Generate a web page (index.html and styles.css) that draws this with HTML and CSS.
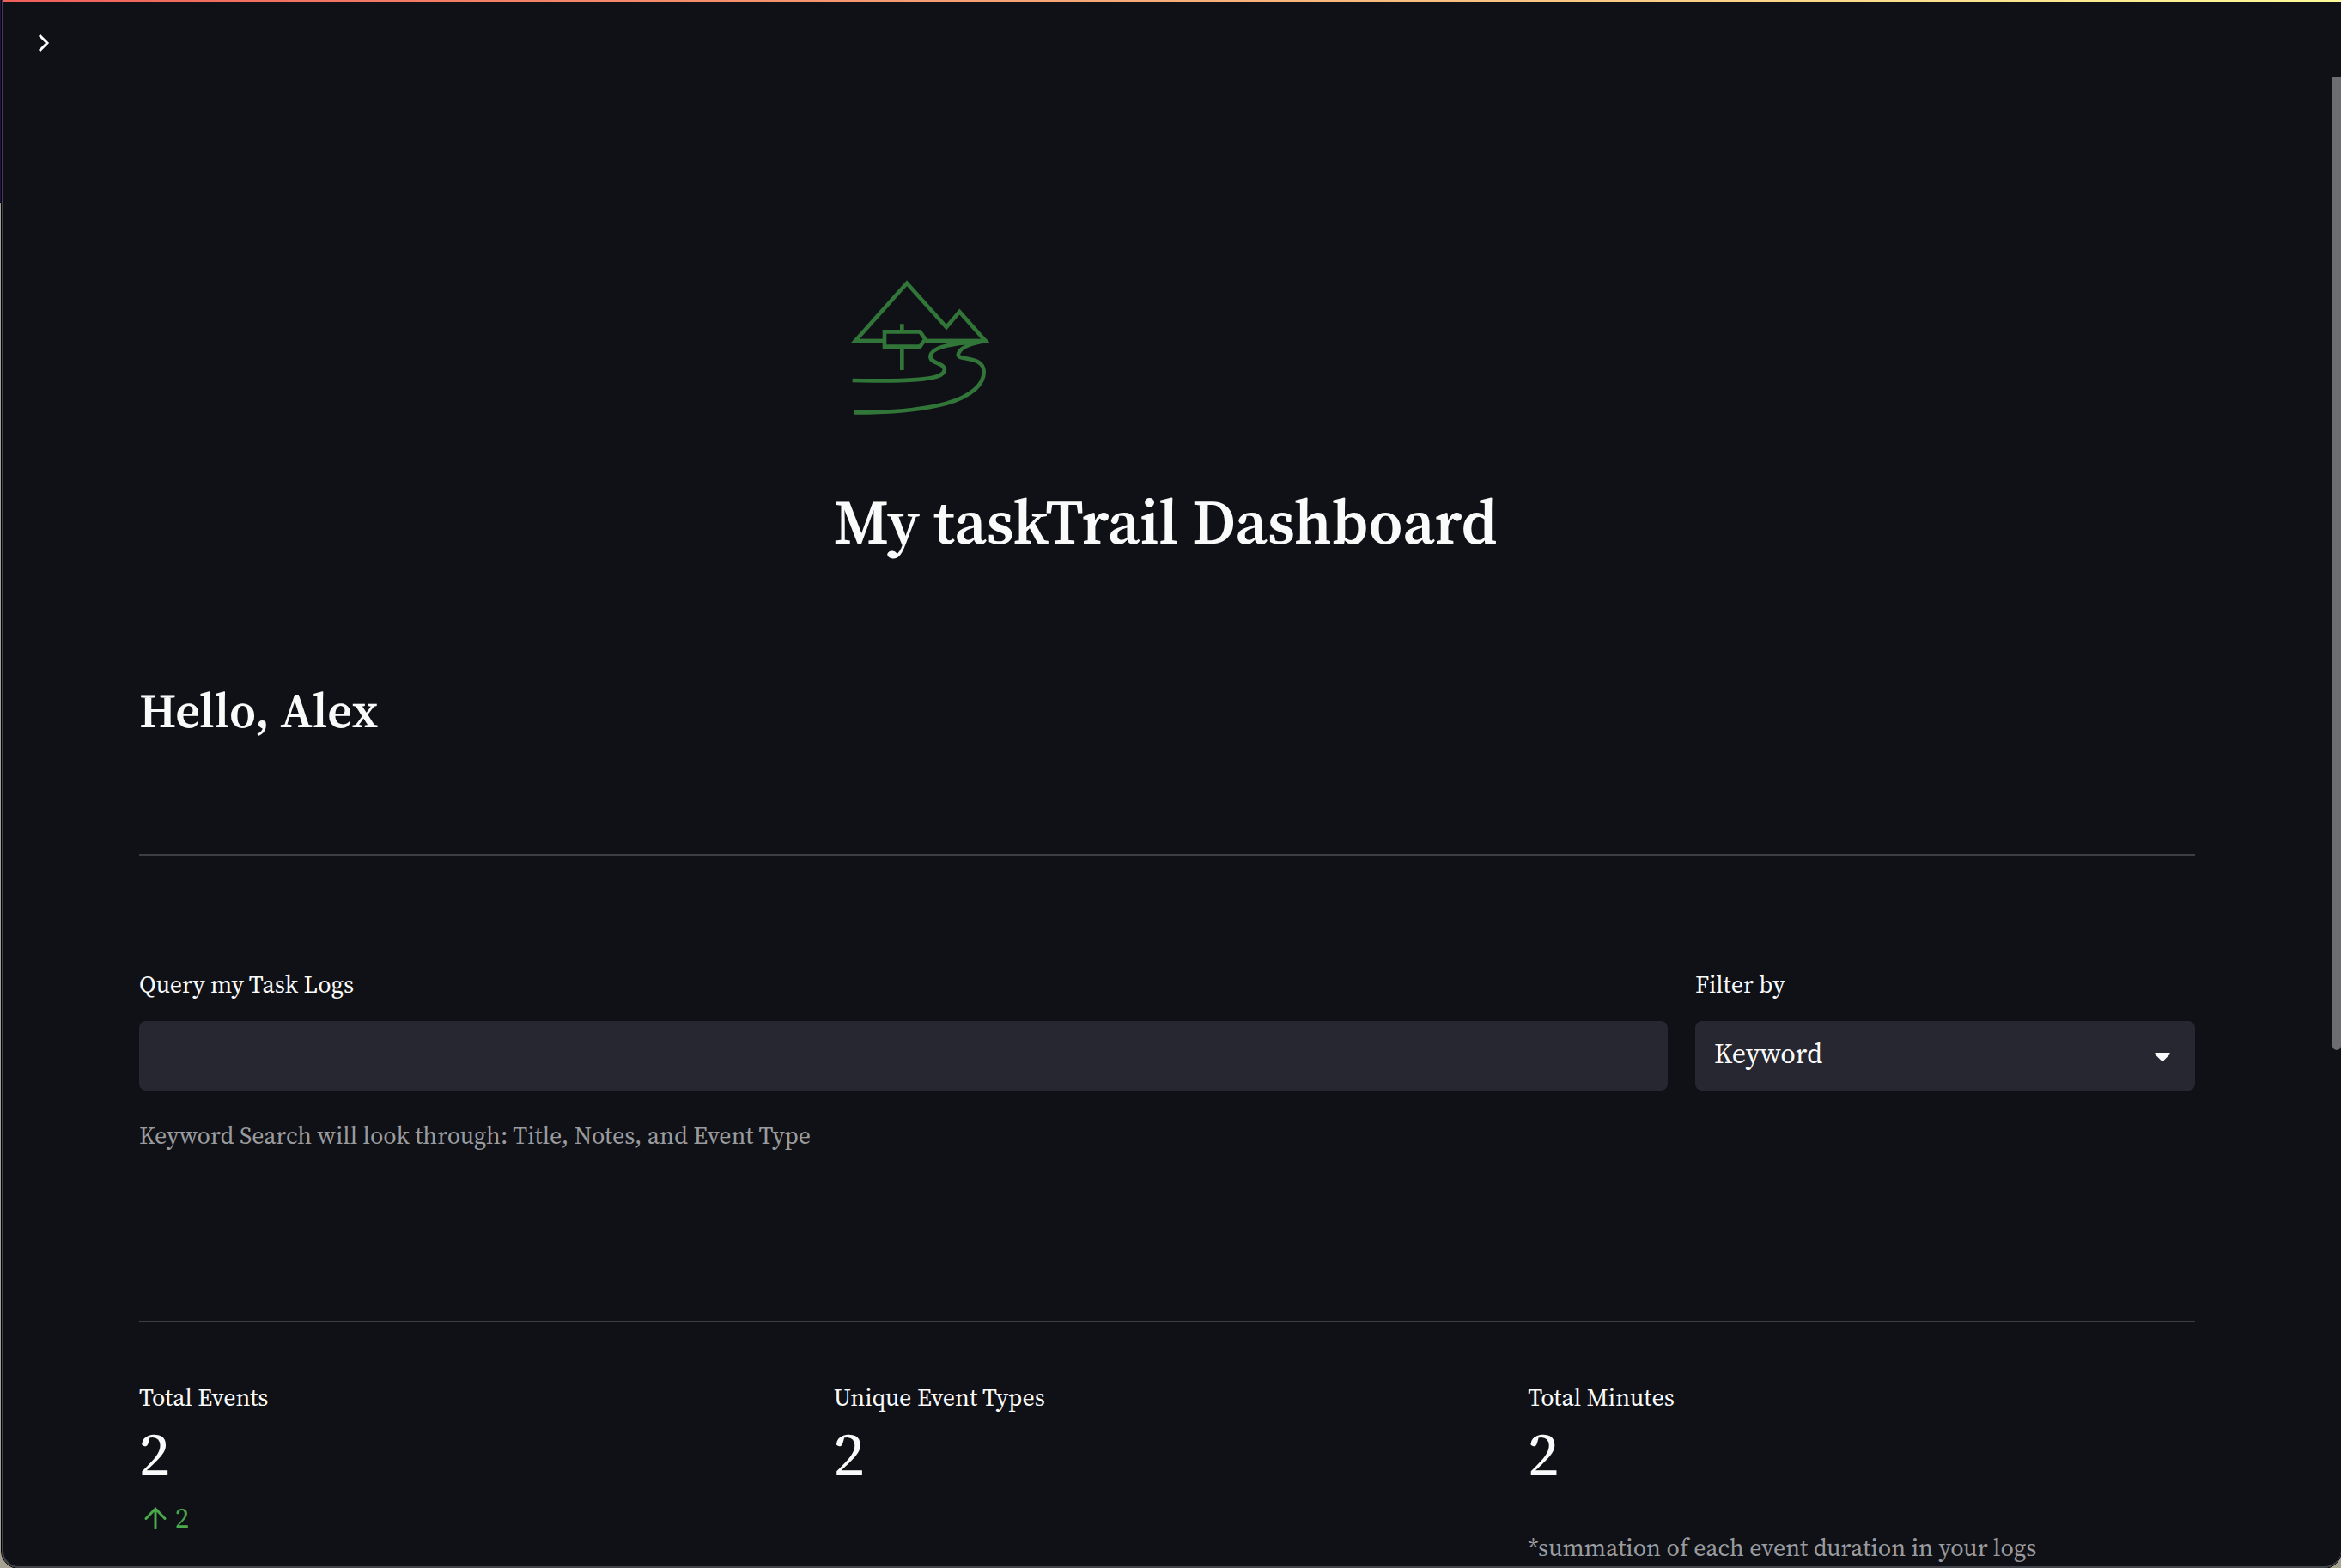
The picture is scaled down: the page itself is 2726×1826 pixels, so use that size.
FILE: index.html
```html
<!DOCTYPE html>
<html lang="en">
<head>
<meta charset="utf-8">
<title>My taskTrail Dashboard</title>
<link rel="stylesheet" href="styles.css">
</head>
<body>
<div class="window">
  <header class="topbar">
    <button class="expand" type="button" aria-label="Open sidebar">
      <svg class="expand-icon" viewBox="0 0 16 24" fill="none" stroke="#fff" stroke-width="3"><path d="M2 3 11 12 2 21"/></svg>
    </button>
  </header>
  <main class="content">
    <div class="thirds brand">
      <div class="brand-cell">
        <svg class="logo" viewBox="33 0 600 600" fill="none" stroke="#317539" stroke-width="14" aria-hidden="true">
          <path d="M205 291H108L288 89 426 243 472 189 562 291H354"/>
          <path d="M103 291H205M354 291H568"/>
          <path d="M210 259H334L352 285 334 311H210ZM271 232V259M271 311V393"/>
          <path d="M98 429C260 433 350 430 395 415C422 405 427 386 408 375C389 365 370 362 370 345C372 315 430 304 500 297L562 291"/>
          <path d="M103 541C220 542 340 532 424 510C520 482 557 440 557 400C557 365 530 358 488 351C468 348 464 342 470 331C479 313 510 300 562 291"/>
        </svg>
        <h1 class="title">My taskTrail Dashboard</h1>
      </div>
    </div>
    <h2 class="greeting">Hello, Alex</h2>
    <hr class="rule">
    <form class="search">
      <div class="field">
        <label class="label" for="query">Query my Task Logs</label>
        <input class="control" id="query" type="text">
        <p class="note">Keyword Search will look through: Title, Notes, and Event Type</p>
      </div>
      <div class="field">
        <label class="label" for="filter">Filter by</label>
        <div class="select">
          <select class="control" id="filter"><option>Keyword</option></select>
          <svg class="caret" viewBox="0 0 18 10" fill="#fafafa" aria-hidden="true"><path d="M1 0H17Q18.500 0.500 17.500 2L10.500 9Q9 10.500 7.500 9L0.500 2Q-0.500 0.500 1 0Z"/></svg>
        </div>
      </div>
    </form>
    <hr class="rule">
    <section class="thirds metrics">
      <div class="metric">
        <p class="label">Total Events</p>
        <p class="value">2</p>
        <p class="delta">
          <svg class="arrow" viewBox="0 0 26 26" fill="none" stroke="#4ba84b" stroke-width="3" stroke-linecap="round" aria-hidden="true"><path d="M13 25V2M2 13.500 13 2 24 13.500"/></svg>
          2
        </p>
      </div>
      <div class="metric">
        <p class="label">Unique Event Types</p>
        <p class="value">2</p>
      </div>
      <div class="metric">
        <p class="label">Total Minutes</p>
        <p class="value">2</p>
        <p class="note">*summation of each event duration in your logs</p>
      </div>
    </section>
  </main>
  <div class="scroll-thumb"></div>
</div>
</body>
</html>
```
FILE: styles.css
```css
* { box-sizing: border-box; }

body {
  margin: 0;
  height: 100vh;
  overflow: hidden;
  padding-left: 2px;
  background: linear-gradient(#2c0a58 235px, #000 235px, #000 236px, #a5a294 236px);
  color: #fafafa;
  font-family: "Source Serif Pro", "Source Serif 4", "Liberation Serif", serif;
}

h1, h2, p { margin: 0; }

.window {
  position: relative;
  height: 100vh;
  overflow: hidden;
  background: #0f1116;
  border: solid #40444a;
  border-width: 0 0 2px 2px;
  border-radius: 0 0 20px 20px;
  outline: 1px solid #000;
}

.topbar {
  height: 92px;
  padding: 36px 40px 0;
  border-top: 2px solid;
  border-image: linear-gradient(90deg, #f0605a, #fefb98) 1;
}

.expand {
  display: block;
  padding: 0;
  border: 0;
  background: none;
}

.expand-icon { display: block; width: 16px; height: 24px; }

.content { padding: 208px 170px 0 158px; }

.thirds {
  display: grid;
  grid-template-columns: repeat(3, minmax(0, 1fr));
  column-gap: 32px;
}

.brand-cell { grid-column: 2; }

.logo { display: block; width: 200px; height: 200px; }

.title {
  margin-top: 58px;
  font-size: 72px;
  font-weight: 600;
  line-height: 100px;
  white-space: nowrap;
}

.greeting {
  margin-top: 130px;
  font-size: 56px;
  font-weight: 600;
  line-height: 80px;
}

.rule {
  margin: 127px 0;
  height: 2px;
  border: 0;
  background: #3d3e43;
}

.search {
  display: grid;
  grid-template-columns: 1780fr 582fr;
  column-gap: 32px;
  padding-bottom: 67px;
}

.label {
  display: block;
  font-size: 28px;
  line-height: 44px;
}

.control {
  display: block;
  width: 100%;
  height: 81px;
  margin-top: 21px;
  padding: 0 22px 5px;
  appearance: none;
  border: 0;
  border-radius: 8px;
  background: #262730;
  color: inherit;
  font-family: inherit;
  font-size: 32px;
}

.select { position: relative; }

.caret {
  position: absolute;
  right: 29px;
  top: 37px;
  width: 18px;
  height: 10px;
}

.note {
  color: #9a9b9e;
  font-size: 28px;
  line-height: 44px;
}

.field .note { margin-top: 30px; }

.metrics { margin-top: -62px; }

.value { font-size: 72px; line-height: 88px; }

.delta {
  display: flex;
  align-items: center;
  gap: 10px;
  margin-top: 9px;
  padding-left: 6px;
  color: #4ba84b;
  font-size: 32px;
  line-height: 44px;
}

.arrow { width: 26px; height: 26px; }

.metric .note { margin-top: 43px; }

.scroll-thumb {
  position: absolute;
  top: 90px;
  right: 0;
  width: 10px;
  height: 1133px;
  border-radius: 0 0 5px 5px;
  background: #6c6d71;
}
```
